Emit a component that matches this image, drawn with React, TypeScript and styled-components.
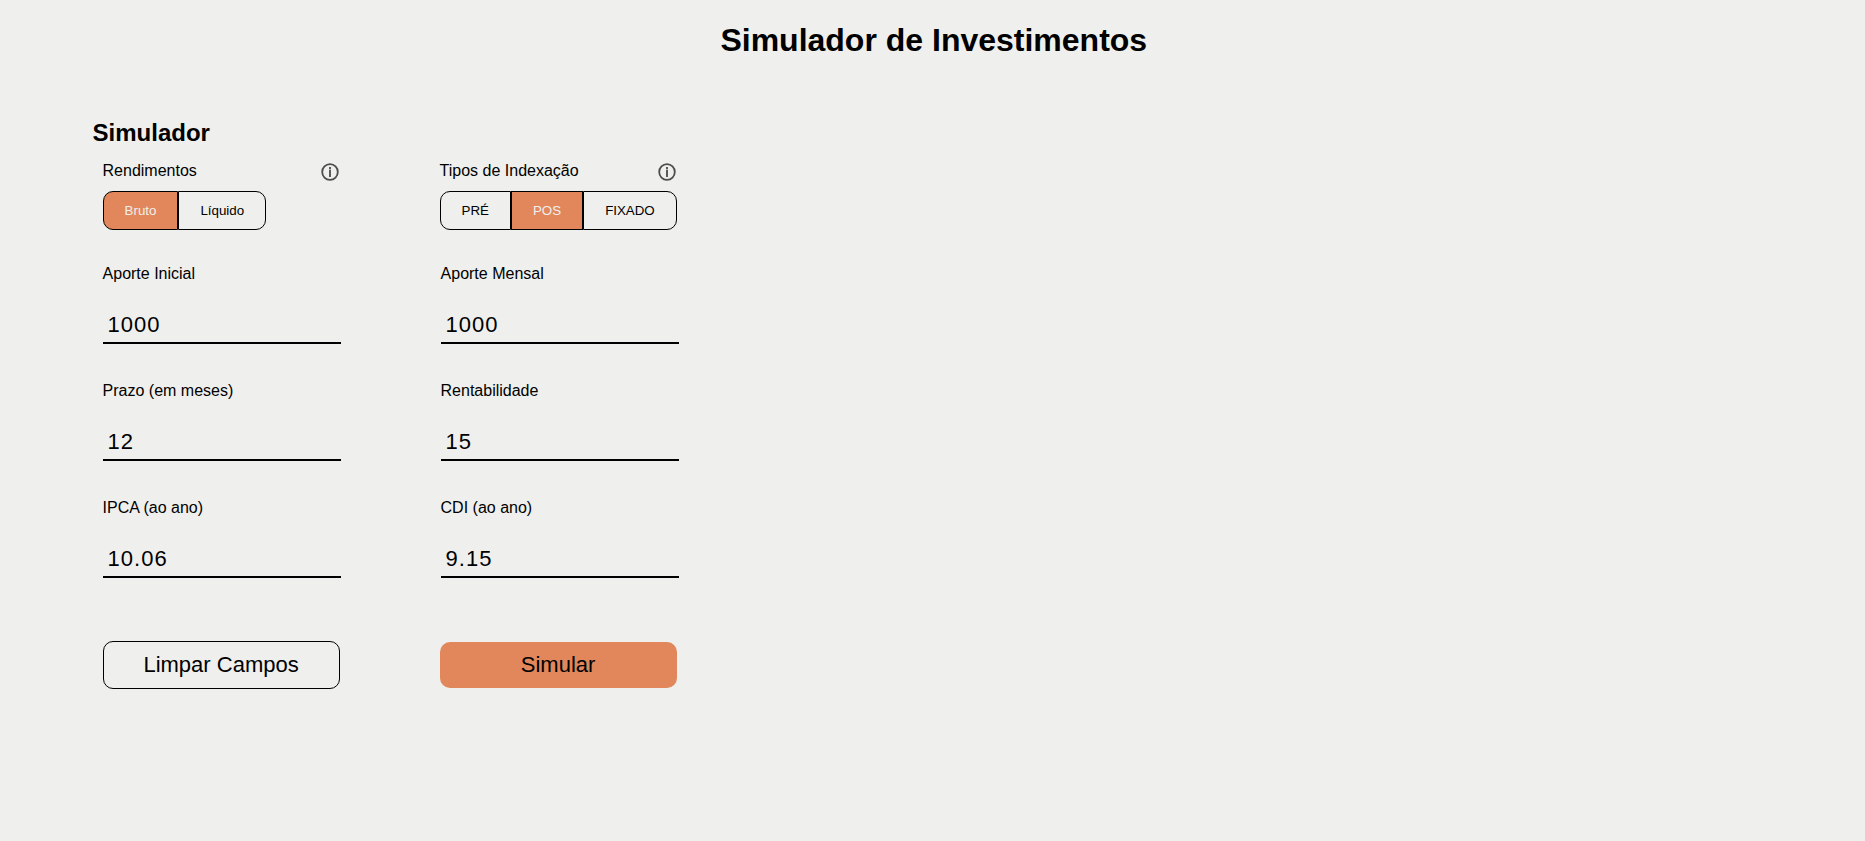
import React, { useState } from 'react';
import styled, { createGlobalStyle } from 'styled-components';

const accent = '#e1875b';
const surface = '#efefed';

const GlobalStyle = createGlobalStyle`
  *, *::before, *::after { box-sizing: border-box; }
  body {
    margin: 0;
    background: ${surface};
    color: #000;
    font-family: "Liberation Sans", Arial, sans-serif;
    font-size: 16px;
  }
  button, input { font-family: inherit; color: inherit; }
`;

const Page = styled.main`
  padding: 22px 100px 60px 5.5%;
`;

const Title = styled.h1`
  margin: 0 0 60px;
  font-size: 32px;
  line-height: 37px;
  text-align: center;
`;

const Subtitle = styled.h2`
  margin: 0 0 15px -10px;
  font-size: 24px;
  line-height: 28px;
`;

const Columns = styled.div<{ $column: number; $rowGap?: number }>`
  display: grid;
  grid-template-columns: repeat(2, minmax(0, ${p => p.$column}px));
  column-gap: 100px;
  row-gap: ${p => p.$rowGap ?? 0}px;
  align-items: center;
`;

const ToggleSet = styled.fieldset`
  margin: 0 0 35px;
  padding: 0;
  border: 0;
  min-width: 0;
`;

const ToggleHeader = styled.div`
  display: flex;
  justify-content: space-between;
  align-items: flex-start;
  height: 18px;
  margin-bottom: 11px;
  padding-right: 1px;
  line-height: 18px;
`;

const InfoButton = styled.button`
  width: 18px;
  height: 18px;
  margin-top: 1px;
  padding: 0;
  border: 0;
  background: none;
  cursor: pointer;

  svg { display: block; }
`;

const ToggleGroup = styled.div`
  display: inline-flex;
  height: 39px;
  vertical-align: top;
`;

const ToggleButton = styled.button<{ $active: boolean }>`
  padding: 0 21px;
  border: 1px solid #000;
  background: ${p => (p.$active ? accent : 'transparent')};
  color: ${p => (p.$active ? surface : '#000')};
  white-space: nowrap;
  cursor: pointer;

  &:first-child { border-radius: 10px 0 0 10px; }
  &:last-child { border-radius: 0 10px 10px 0; }
`;

const FieldBox = styled.div`
  display: flex;
  flex-direction: column;
`;

const FieldLabel = styled.label`
  margin-bottom: 25px;
  line-height: 18px;
`;

const FieldInput = styled.input`
  width: 100%;
  height: 36px;
  padding: 0 5px;
  border: 0;
  border-bottom: 2px solid #000;
  border-radius: 0;
  outline: 0;
  background: transparent;
  font-size: 22px;
  letter-spacing: 1px;
`;

const Actions = styled(Columns)`
  margin-top: 63px;
`;

const ActionButton = styled.button<{ $primary?: boolean }>`
  height: ${p => (p.$primary ? 46 : 48)}px;
  border: ${p => (p.$primary ? '0' : '1px solid #000')};
  border-radius: 10px;
  background: ${p => (p.$primary ? accent : 'transparent')};
  font-size: 22px;
  cursor: pointer;
`;

const InfoIcon = () => (
  <svg width="18" height="18" viewBox="0 0 18 18" aria-hidden="true">
    <circle cx="9" cy="9" r="7.8" fill="none" stroke="#4d4d4d" strokeWidth="1.8" />
    <rect x="8" y="4" width="2" height="2" fill="#5a5a5a" />
    <rect x="8" y="6.6" width="2" height="7.4" fill="#5a5a5a" />
  </svg>
);

interface ToggleProps {
  label: string;
  options: string[];
  value: string;
  onChange: (option: string) => void;
}

const Toggle = ({ label, options, value, onChange }: ToggleProps) => (
  <ToggleSet aria-label={label}>
    <ToggleHeader>
      <span>{label}</span>
      <InfoButton type="button" aria-label={`Informações: ${label}`}>
        <InfoIcon />
      </InfoButton>
    </ToggleHeader>
    <ToggleGroup>
      {options.map(option => (
        <ToggleButton
          key={option}
          type="button"
          $active={option === value}
          aria-pressed={option === value}
          onClick={() => onChange(option)}
        >
          {option}
        </ToggleButton>
      ))}
    </ToggleGroup>
  </ToggleSet>
);

const fields = [
  { id: 'inicial', label: 'Aporte Inicial', initial: '1000' },
  { id: 'mensal', label: 'Aporte Mensal', initial: '1000' },
  { id: 'prazo', label: 'Prazo (em meses)', initial: '12' },
  { id: 'rentabilidade', label: 'Rentabilidade', initial: '15' },
  { id: 'ipca', label: 'IPCA (ao ano)', initial: '10.06' },
  { id: 'cdi', label: 'CDI (ao ano)', initial: '9.15' },
];

const initialValues: Record<string, string> = Object.fromEntries(
  fields.map(f => [f.id, f.initial]),
);

export default function App() {
  const [income, setIncome] = useState('Bruto');
  const [indexing, setIndexing] = useState('POS');
  const [values, setValues] = useState(initialValues);

  const clear = () => setValues(Object.fromEntries(fields.map(f => [f.id, ''])));

  return (
    <>
      <GlobalStyle />
      <Page>
        <Title>Simulador de Investimentos</Title>
        <Subtitle>Simulador</Subtitle>
        <form onSubmit={e => e.preventDefault()}>
          <Columns $column={237}>
            <Toggle
              label="Rendimentos"
              options={['Bruto', 'Líquido']}
              value={income}
              onChange={setIncome}
            />
            <Toggle
              label="Tipos de Indexação"
              options={['PRÉ', 'POS', 'FIXADO']}
              value={indexing}
              onChange={setIndexing}
            />
          </Columns>
          <Columns $column={238} $rowGap={38}>
            {fields.map(f => (
              <FieldBox key={f.id}>
                <FieldLabel htmlFor={f.id}>{f.label}</FieldLabel>
                <FieldInput
                  id={f.id}
                  type="text"
                  inputMode="decimal"
                  value={values[f.id]}
                  onChange={e => setValues({ ...values, [f.id]: e.target.value })}
                />
              </FieldBox>
            ))}
          </Columns>
          <Actions $column={237}>
            <ActionButton type="button" onClick={clear}>Limpar Campos</ActionButton>
            <ActionButton type="submit" $primary>Simular</ActionButton>
          </Actions>
        </form>
      </Page>
    </>
  );
}
